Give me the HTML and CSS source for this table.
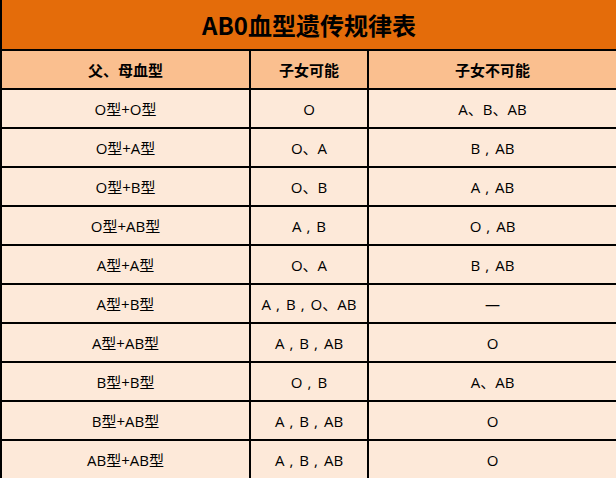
FILE: index.html
```html
<!DOCTYPE html>
<html lang="zh-CN">
<head>
<meta charset="utf-8">
<title>AB0血型遗传规律表</title>
<link rel="stylesheet" href="styles.css">
</head>
<body>
<div class="sheet">
  <div class="title">AB0血型遗传规律表</div>
  <div class="row head">
    <div class="cell">父、母血型</div>
    <div class="cell">子女可能</div>
    <div class="cell">子女不可能</div>
  </div>
  <div class="row"><div class="cell">O型+O型</div><div class="cell">O</div><div class="cell">A、B、AB</div></div>
  <div class="row"><div class="cell">O型+A型</div><div class="cell">O、A</div><div class="cell">B<span class="cm">,</span>AB</div></div>
  <div class="row"><div class="cell">O型+B型</div><div class="cell">O、B</div><div class="cell">A<span class="cm">,</span>AB</div></div>
  <div class="row"><div class="cell">O型+AB型</div><div class="cell">A<span class="cm">,</span>B</div><div class="cell">O<span class="cm">,</span>AB</div></div>
  <div class="row"><div class="cell">A型+A型</div><div class="cell">O、A</div><div class="cell">B<span class="cm">,</span>AB</div></div>
  <div class="row"><div class="cell">A型+B型</div><div class="cell">A<span class="cm">,</span>B<span class="cm">,</span>O、AB</div><div class="cell">—</div></div>
  <div class="row"><div class="cell">A型+AB型</div><div class="cell">A<span class="cm">,</span>B<span class="cm">,</span>AB</div><div class="cell">O</div></div>
  <div class="row"><div class="cell">B型+B型</div><div class="cell">O<span class="cm">,</span>B</div><div class="cell">A、AB</div></div>
  <div class="row"><div class="cell">B型+AB型</div><div class="cell">A<span class="cm">,</span>B<span class="cm">,</span>AB</div><div class="cell">O</div></div>
  <div class="row"><div class="cell">AB型+AB型</div><div class="cell">A<span class="cm">,</span>B<span class="cm">,</span>AB</div><div class="cell">O</div></div>
</div>
</body>
</html>
```
FILE: styles.css
```css
* { box-sizing: border-box; }
html, body {
  margin: 0;
  padding: 0;
  overflow: hidden;
  background: #ffffff;
}
body {
  font-family: "Open Sans", "Noto Sans CJK SC", sans-serif;
  color: #000;
}
.sheet {
  width: 618px;
  border-left: 2px solid #000;
  display: flex;
  flex-direction: column;
}
.title {
  height: 51px;
  border-bottom: 2px solid #000;
  border-right: 2px solid #000;
  background: #e46c0a;
  font-size: 24px;
  font-weight: 700;
  display: flex;
  align-items: center;
  justify-content: center;
  font-family: "Noto Sans CJK SC", sans-serif;
}
.row {
  display: grid;
  grid-template-columns: 249px 118px 1fr;
  height: 39px;
  border-bottom: 2px solid #000;
  background: #fde9d9;
}
.row.head {
  background: #fabf8f;
  font-weight: 700;
}
.row.head .cell {
  font-family: "Noto Sans CJK SC", sans-serif;
}
.cell {
  border-right: 2px solid #000;
  display: flex;
  align-items: center;
  justify-content: center;
  font-size: 15px;
  white-space: nowrap;
}
.cm {
  margin: 0 6px 0 5px;
}
```
